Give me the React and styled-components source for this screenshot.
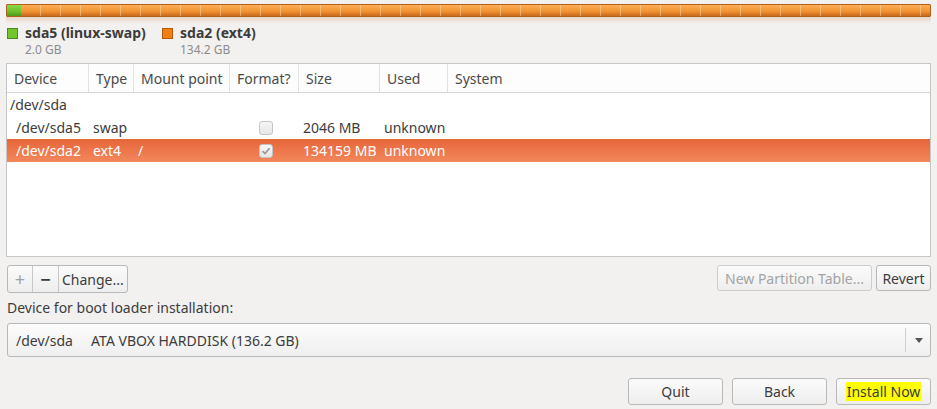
import React from "react";
import styled, { createGlobalStyle } from "styled-components";

const GlobalStyle = createGlobalStyle`
  html, body {
    margin: 0;
    padding: 0;
    background: #f2f1f0;
  }
  body {
    font-family: "Noto Sans", "DejaVu Sans", sans-serif;
    font-size: 14px;
    color: #3c3c3c;
  }
`;

const COLS = "82px 45px 96px 69px 81px 68px 1fr";

const Page = styled.div`
  box-sizing: border-box;
  width: 937px;
  height: 409px;
  padding: 4px 6px 0 6px;
  display: flex;
  flex-direction: column;
`;

const UsageBar = styled.div`
  box-sizing: border-box;
  height: 13px;
  display: flex;
  border: 1px solid #b2611c;
  border-radius: 1px;
  overflow: hidden;
`;

const Segment = styled.div`
  flex: ${(p) => (p.$grow ? 1 : "none")};
  width: ${(p) => (p.$width ? p.$width + "px" : "auto")};
  background:
    repeating-linear-gradient(90deg, transparent 0 19px, rgba(255, 225, 180, 0.45) 19px 20px),
    linear-gradient(${(p) => p.$top}, ${(p) => p.$mid} 55%, ${(p) => p.$bottom});
`;

const Reflection = styled.div`
  height: 7px;
  background: linear-gradient(rgba(214, 140, 80, 0.28), rgba(242, 241, 240, 0));
`;

const Legend = styled.div`
  display: flex;
  gap: 16px;
  padding: 1px 0 0 1px;
`;

const LegendItem = styled.div`
  display: flex;
  gap: 7px;
  align-items: flex-start;
  width: ${(p) => (p.$width ? p.$width + "px" : "auto")};
`;

const Swatch = styled.span`
  box-sizing: border-box;
  width: 11px;
  height: 11px;
  margin-top: 3px;
  background: ${(p) => p.$color};
  border: 1px solid ${(p) => p.$border};
`;

const LegendText = styled.div`
  display: flex;
  flex-direction: column;
`;

const LegendName = styled.span`
  font-weight: bold;
  font-size: 14px;
  line-height: 16px;
  color: #3c3c3c;
`;

const LegendSize = styled.span`
  margin-top: 2px;
  font-size: 12px;
  line-height: 14px;
  color: #8c8c8c;
`;

const Table = styled.div`
  box-sizing: border-box;
  margin-top: 6px;
  height: 194px;
  background: #fff;
  border: 1px solid #c6c6c6;
`;

const HeaderRow = styled.div`
  display: grid;
  grid-template-columns: ${COLS};
  height: 28px;
  border-bottom: 1px solid #d8d8d8;
  background: #fdfdfd;
`;

const HeaderCell = styled.div`
  display: flex;
  align-items: center;
  padding-left: 7px;
  border-right: ${(p) => (p.$last ? "none" : "1px solid #e2e2e2")};
  color: #4a4a4a;
`;

const Row = styled.div`
  display: grid;
  grid-template-columns: ${COLS};
  height: 23px;
  align-items: center;
  color: ${(p) => (p.$selected ? "#fff" : "#3c3c3c")};
  background: ${(p) =>
    p.$selected ? "linear-gradient(#e7653a, #f2885b)" : "transparent"};
`;

const Cell = styled.div`
  padding-left: ${(p) => p.$pad ?? 4}px;
  white-space: nowrap;
  display: flex;
  justify-content: ${(p) => (p.$center ? "center" : "flex-start")};
`;

const DiskCell = styled.div`
  grid-column: 1 / -1;
  padding-left: 3px;
`;

const CheckBox = styled.span`
  box-sizing: border-box;
  width: 14px;
  height: 14px;
  border: 1px solid #c4c4c4;
  border-radius: 3px;
  background: linear-gradient(#f6f6f6, #e6e6e6);
  display: flex;
  align-items: center;
  justify-content: center;
  margin-left: 2px;
`;

const ToolRow = styled.div`
  display: flex;
  justify-content: space-between;
  margin-top: 8px;
  height: 26px;
`;

const ButtonGroup = styled.div`
  display: flex;
  gap: ${(p) => p.$gap ?? 0}px;
`;

const Button = styled.button`
  box-sizing: border-box;
  height: ${(p) => p.$height ?? 26}px;
  width: ${(p) => (p.$width ? p.$width + "px" : "auto")};
  padding: 0 ${(p) => p.$pad ?? 5}px;
  font: inherit;
  color: ${(p) => (p.disabled ? "#a4a4a4" : "#3c3c3c")};
  background: linear-gradient(#fbfbfb, #eeeeee);
  border: 1px solid ${(p) => (p.disabled ? "#cdcdcd" : "#b8b8b8")};
  border-radius: 3px;
  display: flex;
  align-items: center;
  justify-content: center;
`;

const Segmented = styled.div`
  display: flex;
  height: 26px;
  margin-left: 1px;
  border: 1px solid #b8b8b8;
  border-radius: 3px;
  background: linear-gradient(#fbfbfb, #eeeeee);
  overflow: hidden;
`;

const SegButton = styled.div`
  box-sizing: border-box;
  width: ${(p) => (p.$width ? p.$width + "px" : "auto")};
  padding: 0 ${(p) => p.$pad ?? 0}px;
  display: flex;
  align-items: center;
  justify-content: center;
  border-right: ${(p) => (p.$last ? "none" : "1px solid #c8c8c8")};
  color: ${(p) => (p.$dim ? "#a0a0a0" : "#3c3c3c")};
  font-size: ${(p) => p.$size ?? 14}px;
  font-weight: ${(p) => (p.$bold ? "bold" : "normal")};
`;

const Label = styled.div`
  margin-top: 7px;
  padding-left: 1px;
  line-height: 20px;
`;

const Combo = styled.div`
  box-sizing: border-box;
  margin-top: 5px;
  margin-left: 1px;
  height: 34px;
  display: flex;
  align-items: center;
  border: 1px solid #b8b8b8;
  border-radius: 3px;
  background: linear-gradient(#fcfcfc, #efefef);
`;

const ComboText = styled.div`
  flex: 1;
  padding-left: 8px;
  white-space: pre;
`;

const ComboArrow = styled.div`
  width: 24px;
  height: 24px;
  border-left: 1px solid #d0d0d0;
  display: flex;
  align-items: center;
  justify-content: center;
`;

const Triangle = styled.span`
  width: 0;
  height: 0;
  border-left: 4px solid transparent;
  border-right: 4px solid transparent;
  border-top: 5px solid #555;
  margin-left: 1px;
`;

const Footer = styled.div`
  display: flex;
  justify-content: flex-end;
  gap: 9px;
  margin-top: 21px;
`;

const Highlight = styled.span`
  background: #ffff00;
  padding: 0 1px;
  line-height: 19px;
`;

const partitions = [
  { device: "/dev/sda5", type: "swap", mount: "", checked: false, size: "2046 MB", used: "unknown" },
  { device: "/dev/sda2", type: "ext4", mount: "/", checked: true, size: "134159 MB", used: "unknown", selected: true },
];

function Check() {
  return (
    <svg width="10" height="10" viewBox="0 0 10 10">
      <path d="M1.5 5.2 L4 7.6 L8.6 2.2" fill="none" stroke="#9a9a9a" strokeWidth="1.7" />
    </svg>
  );
}

export default function App() {
  return (
    <>
      <GlobalStyle />
      <Page>
        <UsageBar>
          <Segment $width={14} $top="#8ad84a" $mid="#6fc12c" $bottom="#4f9a1a" />
          <Segment $grow $top="#fbae55" $mid="#f39534" $bottom="#c8691d" />
        </UsageBar>
        <Reflection />

        <Legend>
          <LegendItem $width={139}>
            <Swatch $color="#73c52d" $border="#4d8a1d" />
            <LegendText>
              <LegendName>sda5 (linux-swap)</LegendName>
              <LegendSize>2.0 GB</LegendSize>
            </LegendText>
          </LegendItem>
          <LegendItem>
            <Swatch $color="#f37e14" $border="#b35a0c" />
            <LegendText>
              <LegendName>sda2 (ext4)</LegendName>
              <LegendSize>134.2 GB</LegendSize>
            </LegendText>
          </LegendItem>
        </Legend>

        <Table>
          <HeaderRow>
            <HeaderCell>Device</HeaderCell>
            <HeaderCell>Type</HeaderCell>
            <HeaderCell>Mount point</HeaderCell>
            <HeaderCell>Format?</HeaderCell>
            <HeaderCell>Size</HeaderCell>
            <HeaderCell>Used</HeaderCell>
            <HeaderCell $last>System</HeaderCell>
          </HeaderRow>
          <Row>
            <DiskCell>/dev/sda</DiskCell>
          </Row>
          {partitions.map((p) => (
            <Row key={p.device} $selected={p.selected}>
              <Cell $pad={9}>{p.device}</Cell>
              <Cell>{p.type}</Cell>
              <Cell>{p.mount}</Cell>
              <Cell $center $pad={0}>
                <CheckBox>{p.checked && <Check />}</CheckBox>
              </Cell>
              <Cell>{p.size}</Cell>
              <Cell>{p.used}</Cell>
              <Cell />
            </Row>
          ))}
        </Table>

        <ToolRow>
          <Segmented>
            <SegButton $width={25} $dim $size={18}>+</SegButton>
            <SegButton $width={26} $size={18} $bold>−</SegButton>
            <SegButton $pad={3} $last>Change...</SegButton>
          </Segmented>
          <ButtonGroup $gap={4}>
            <Button disabled $width={155}>New Partition Table...</Button>
            <Button $width={55}>Revert</Button>
          </ButtonGroup>
        </ToolRow>

        <Label>Device for boot loader installation:</Label>
        <Combo>
          <ComboText>{"/dev/sda     ATA VBOX HARDDISK (136.2 GB)"}</ComboText>
          <ComboArrow>
            <Triangle />
          </ComboArrow>
        </Combo>

        <Footer>
          <Button $width={95} $height={27}>Quit</Button>
          <Button $width={95} $height={27}>Back</Button>
          <Button $width={95} $height={27}>
            <Highlight>Install Now</Highlight>
          </Button>
        </Footer>
      </Page>
    </>
  );
}
